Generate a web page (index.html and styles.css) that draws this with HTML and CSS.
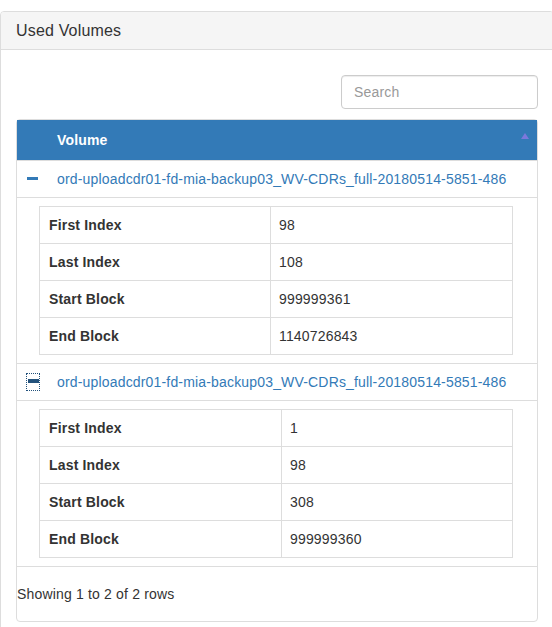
FILE: index.html
```html
<!DOCTYPE html>
<html>
<head>
<meta charset="utf-8">
<link rel="stylesheet" href="styles.css">
</head>
<body>
<div class="page">
  <div class="panel">
    <div class="panel-heading"><h3 class="panel-title">Used Volumes</h3></div>
    <div class="panel-body">
      <div class="toolbar">
        <input class="search" type="text" placeholder="Search">
      </div>
      <div class="table-container">
        <table class="main-table">
          <thead>
            <tr>
              <th class="detail-col"></th>
              <th><div class="th-inner">Volume<span class="sort-asc"></span></div></th>
            </tr>
          </thead>
          <tbody>
            <tr>
              <td class="detail-col"><a class="toggle"><span class="minus"></span></a></td>
              <td><a class="vol-link">ord-uploadcdr01-fd-mia-backup03_WV-CDRs_full-20180514-5851-486</a></td>
            </tr>
            <tr class="detail-view">
              <td colspan="2">
                <div class="detail-wrap">
                  <table class="info-table info-a">
                    <tr><th>First Index</th><td>98</td></tr>
                    <tr><th>Last Index</th><td>108</td></tr>
                    <tr><th>Start Block</th><td>999999361</td></tr>
                    <tr><th>End Block</th><td>1140726843</td></tr>
                  </table>
                </div>
              </td>
            </tr>
            <tr>
              <td class="detail-col"><a class="toggle focused"><span class="minus"></span></a></td>
              <td><a class="vol-link">ord-uploadcdr01-fd-mia-backup03_WV-CDRs_full-20180514-5851-486</a></td>
            </tr>
            <tr class="detail-view">
              <td colspan="2">
                <div class="detail-wrap">
                  <table class="info-table info-b">
                    <tr><th>First Index</th><td>1</td></tr>
                    <tr><th>Last Index</th><td>98</td></tr>
                    <tr><th>Start Block</th><td>308</td></tr>
                    <tr><th>End Block</th><td>999999360</td></tr>
                  </table>
                </div>
              </td>
            </tr>
          </tbody>
        </table>
        <div class="pagination-detail">Showing 1 to 2 of 2 rows</div>
      </div>
    </div>
  </div>
</div>
</body>
</html>
```
FILE: styles.css
```css
html, body {
  margin: 0;
  padding: 0;
  background: #fff;
  overflow: hidden;
}
body {
  font-family: "Liberation Sans", Arial, sans-serif;
  font-size: 14px;
  line-height: 1.42857;
  letter-spacing: 0.17px;
  color: #333;
}
.page {
  padding-top: 11px;
  width: 560px;
}
.panel {
  width: 554px;
  box-sizing: border-box;
  border: 1px solid #ddd;
  border-radius: 4px;
  background: #fff;
}
.panel-heading {
  background: #f5f5f5;
  border-bottom: 1px solid #ddd;
  padding: 10px 15px;
  border-radius: 3px 3px 0 0;
}
.panel-title {
  margin: 0;
  font-size: 16px;
  font-weight: normal;
  line-height: 17px;
  color: #333;
}
.panel-body {
  padding: 15px;
}
.toolbar {
  display: flex;
  justify-content: flex-end;
  padding: 10px 0;
}
.search {
  width: 197px;
  height: 34px;
  box-sizing: border-box;
  border: 1px solid #ccc;
  border-radius: 4px;
  padding: 6px 12px;
  font-family: "Liberation Sans", Arial, sans-serif;
  font-size: 14px;
  letter-spacing: 0.17px;
  color: #555;
  box-shadow: inset 0 1px 1px rgba(0,0,0,.075);
  outline: none;
}
.search::placeholder {
  color: #999;
}
.table-container {
  border: 1px solid #ddd;
  border-radius: 4px;
}
.main-table {
  width: 100%;
  border-collapse: collapse;
  border-spacing: 0;
}
.main-table thead th {
  background: #337ab7;
  color: #fff;
  font-weight: bold;
  text-align: left;
  padding: 0;
  height: 40px;
  vertical-align: middle;
}
.main-table thead th.detail-col {
  width: 32px;
}
.th-inner {
  position: relative;
  padding: 8px;
  line-height: 24px;
}
.sort-asc {
  position: absolute;
  right: 8px;
  top: 13px;
  width: 0;
  height: 0;
  border-left: 4px solid transparent;
  border-right: 4px solid transparent;
  border-bottom: 6px solid #7b78dc;
}
.main-table tbody td {
  border-top: 1px solid #ddd;
  padding: 8px;
  line-height: 20px;
  vertical-align: top;
}
.main-table tbody td.detail-col {
  padding: 8px 0 8px 10px;
  width: 22px;
}
.toggle {
  display: inline-block;
  width: 12px;
  height: 16px;
  vertical-align: middle;
  position: relative;
  top: -1px;
}
.minus {
  position: absolute;
  left: 0;
  top: 6px;
  width: 11px;
  height: 3px;
  background: #337ab7;
}
.toggle.focused {
  outline: 1px dotted #23527c;
}
.toggle.focused .minus {
  left: 1px;
  top: 5px;
  height: 4px;
  background: #23527c;
}
.vol-link {
  color: #337ab7;
  text-decoration: none;
}
.detail-view > td {
  padding: 8px;
}
.detail-wrap {
  padding: 0 16px 0 14px;
}
.info-table {
  width: 100%;
  border-collapse: collapse;
  border: 1px solid #ddd;
}
.info-table th,
.info-table td {
  border: 1px solid #ddd;
  padding: 8px 9px;
  line-height: 20px;
  text-align: left;
}
.info-table th {
  font-weight: bold;
}
.info-a th {
  width: 212px;
}
.info-b th {
  width: 223px;
}
.pagination-detail {
  border-top: 1px solid #ddd;
  padding: 10px 0;
  line-height: 34px;
}
```
